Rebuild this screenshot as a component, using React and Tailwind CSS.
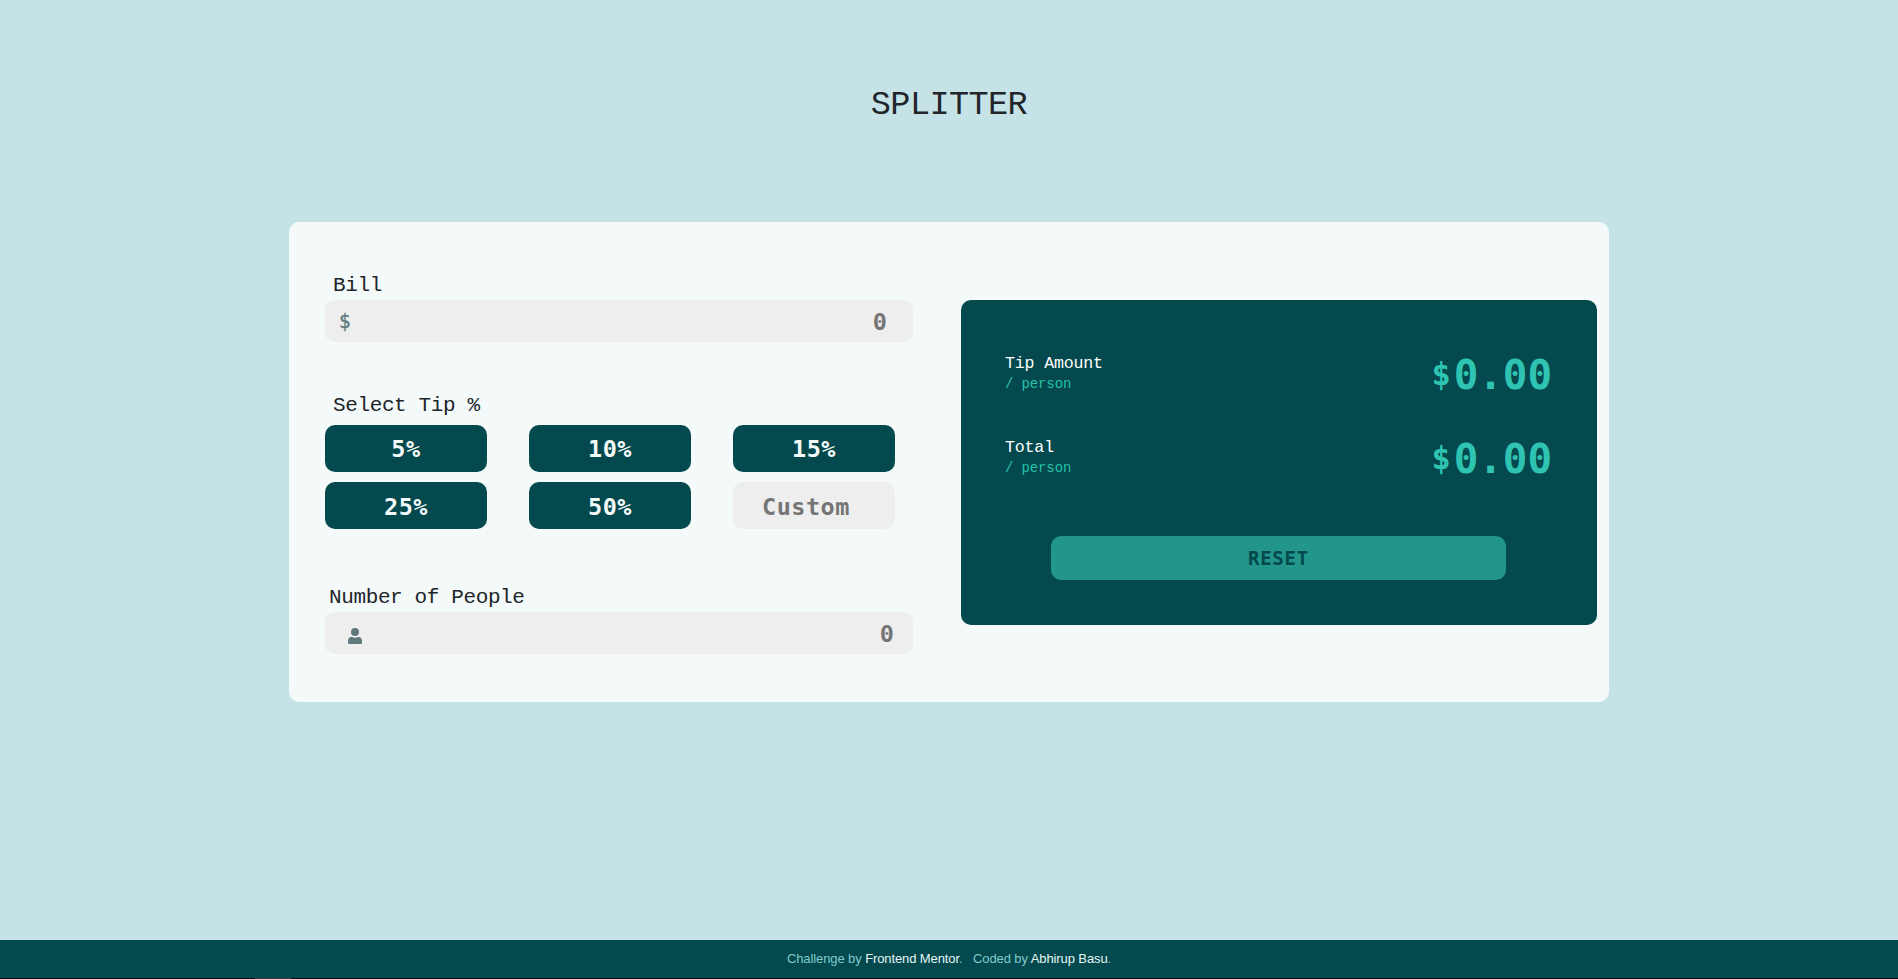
const mono = "font-['Liberation_Mono',monospace]";

function Amount({ label }) {
  return (
    <div className="flex h-[84px] justify-between">
      <div className="pt-[4px]">
        <div className="h-[22px] text-[16.6px] leading-[23px] tracking-[-0.17px] text-white">{label}</div>
        <div className="h-[20px] text-[14px] leading-[20px] tracking-[-0.13px] text-[#26c0ab]">/ person</div>
      </div>
      <div className="flex pt-[3px] font-['DejaVu_Sans_Mono',monospace] font-bold leading-[48px] text-[#2fc4b2]">
        <span className="mr-[3px] text-[32px] leading-[47px]">$</span>
        <span className="text-[41px] leading-[49px] tracking-[-0.1px]">0.00</span>
      </div>
    </div>
  );
}

const tipBase =
  "flex h-[47px] w-[162px] items-center rounded-[10px] font-['DejaVu_Sans_Mono',monospace] text-[23.5px] font-bold tracking-[0.5px]";

function Tip({ children, low }) {
  return (
    <button className={`${tipBase} justify-center bg-[#04494d] text-[#f4fafa] ${low ? "pt-[4px]" : "pt-[2px]"}`}>
      {children}
    </button>
  );
}

export default function App() {
  return (
    <div className={`flex h-[979px] flex-col overflow-hidden bg-[#c5e3e7] text-[#212529] ${mono}`}>
      <h1 className="mt-[81px] h-[48px] text-center text-[33.5px] leading-[49px] tracking-[-0.56px]">SPLITTER</h1>
      <main className="mx-auto mt-[93px] flex h-[480px] w-[1320px] rounded-[10px] bg-[#f4fafa]">
        <section className="ml-[36px] w-[588px] pt-[48px]">
          <label className="block h-[30px] pl-[8px] text-[21px] leading-[32px] tracking-[-0.38px]">Bill</label>
          <div className="flex h-[42px] items-center justify-between rounded-[10px] bg-[#eeeeee] pl-[14px] pr-[26px]">
            <span className="font-['DejaVu_Sans_Mono',monospace] text-[19px] leading-[30px] text-[#5e7a7d] [-webkit-text-stroke:0.4px_#5e7a7d]">$</span>
            <span className="pt-[2px] font-['DejaVu_Sans_Mono',monospace] text-[23.5px] font-bold leading-[30px] text-[#757575]">0</span>
          </div>
          <label className="mt-[48px] block h-[35px] pl-[8px] text-[21px] leading-[32px] tracking-[-0.38px]">Select Tip %</label>
          <div className="grid w-[570px] grid-cols-3 gap-x-[42px] gap-y-[10px]">
            <Tip>5%</Tip>
            <Tip>10%</Tip>
            <Tip>15%</Tip>
            <Tip low>25%</Tip>
            <Tip low>50%</Tip>
            <div className={`${tipBase} bg-[#eeeeee] pl-[29px] pt-[4px] text-[#757575]`}>Custom</div>
          </div>
          <label className="mt-[53px] block h-[30px] pl-[4px] text-[21px] leading-[32px] tracking-[-0.38px]">Number of People</label>
          <div className="flex h-[42px] items-center justify-between rounded-[10px] bg-[#eeeeee] pl-[23px] pr-[19px]">
            <svg className="mt-[5px] h-[16px] w-[14px]" viewBox="0 0 14 16" fill="#5e7a7d">
              <circle cx="7" cy="4" r="4" />
              <path d="M3.200 9h.9c1.800.9 4 .9 5.800 0h.9c2 0 3.200 1.800 3.200 4.200v1.600c0 .7-.5 1.200-1.200 1.200H1.200C.5 16 0 15.500 0 14.800v-1.600C0 10.800 1.200 9 3.200 9Z" />
            </svg>
            <span className="pt-[1px] font-['DejaVu_Sans_Mono',monospace] text-[23.5px] font-bold leading-[30px] text-[#757575]">0</span>
          </div>
        </section>
        <section className="ml-[48px] mt-[78px] h-[325px] w-[636px] rounded-[10px] bg-[#04494d] pl-[44px] pr-[45px] pt-[48px]">
          <Amount label="Tip Amount" />
          <Amount label="Total" />
          <button className="ml-[46px] mt-[20px] flex h-[44px] w-[455px] items-center justify-center rounded-[10px] bg-[#219689] font-['DejaVu_Sans_Mono',monospace] text-[19px] font-bold tracking-[0.8px] text-[#04494d]">
            RESET
          </button>
        </section>
      </main>
      <footer className="mt-auto h-[38px] shrink-0 bg-[#04494d] text-center font-['Liberation_Sans',sans-serif] text-[13px] leading-[37px] tracking-[-0.1px] text-[#7fcbcc]">
        Challenge by <span className="text-[#e4f6f6]">Frontend Mentor</span>. <span className="ml-[7px]">Coded by </span>
        <span className="text-[#e4f6f6]">Abhirup Basu</span>.
      </footer>
      <div className="h-px shrink-0 bg-[#0b0b0b] pl-[255px]">
        <div className="h-px w-[36px] bg-[#3c3c3c]" />
      </div>
    </div>
  );
}
